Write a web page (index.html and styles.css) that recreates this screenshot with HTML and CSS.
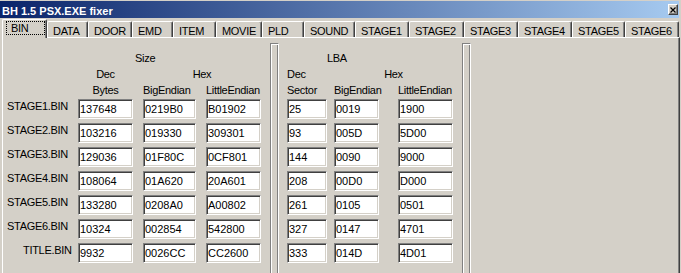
FILE: index.html
```html
<!DOCTYPE html>
<html>
<head>
<meta charset="utf-8">
<title>BH 1.5 PSX.EXE fixer</title>
<link rel="stylesheet" href="styles.css">
</head>
<body>
<div class="window">
  <div class="titlebar">
    <span class="title">BH 1.5 PSX.EXE fixer</span>
    <span class="close"><svg width="6" height="6" viewBox="0 0 6 6"><path d="M0.5 0.5 L5.5 5.5 M5.5 0.5 L0.5 5.5" stroke="#000" stroke-width="1.2" fill="none"/></svg></span>
  </div>
  <div class="tabs">
    <div class="tab sel"><span class="focus">BIN</span></div>
    <div class="tab">DATA</div>
    <div class="tab">DOOR</div>
    <div class="tab">EMD</div>
    <div class="tab">ITEM</div>
    <div class="tab">MOVIE</div>
    <div class="tab">PLD</div>
    <div class="tab">SOUND</div>
    <div class="tab">STAGE1</div>
    <div class="tab">STAGE2</div>
    <div class="tab">STAGE3</div>
    <div class="tab">STAGE4</div>
    <div class="tab">STAGE5</div>
    <div class="tab">STAGE6</div>
  </div>
  <div class="panel">
    <div class="group size">
      <div class="hd size-title">Size</div>
      <div class="hd c2 mid">Dec</div>
      <div class="hd c46 mid">Hex</div>
      <div class="hd c2 mid">Bytes</div>
      <div class="hd c4">BigEndian</div>
      <div class="hd c6">LittleEndian</div>

      <div class="label">STAGE1.BIN</div><div class="field c2">137648</div><div class="field c4">0219B0</div><div class="field c6">B01902</div>
      <div class="label">STAGE2.BIN</div><div class="field c2">103216</div><div class="field c4">019330</div><div class="field c6">309301</div>
      <div class="label">STAGE3.BIN</div><div class="field c2">129036</div><div class="field c4">01F80C</div><div class="field c6">0CF801</div>
      <div class="label">STAGE4.BIN</div><div class="field c2">108064</div><div class="field c4">01A620</div><div class="field c6">20A601</div>
      <div class="label">STAGE5.BIN</div><div class="field c2">133280</div><div class="field c4">0208A0</div><div class="field c6">A00802</div>
      <div class="label">STAGE6.BIN</div><div class="field c2">10324</div><div class="field c4">002854</div><div class="field c6">542800</div>
      <div class="label indent">TITLE.BIN</div><div class="field c2">9932</div><div class="field c4">0026CC</div><div class="field c6">CC2600</div>
    </div>
    <div class="sep"></div>
    <div class="group lba">
      <div class="hd lba-title">LBA</div>
      <div class="hd l1">Dec</div>
      <div class="hd l35 mid">Hex</div>
      <div class="hd l1">Sector</div>
      <div class="hd l3">BigEndian</div>
      <div class="hd l5">LittleEndian</div>

      <div class="field l1">25</div><div class="field l3">0019</div><div class="field l5">1900</div>
      <div class="field l1">93</div><div class="field l3">005D</div><div class="field l5">5D00</div>
      <div class="field l1">144</div><div class="field l3">0090</div><div class="field l5">9000</div>
      <div class="field l1">208</div><div class="field l3">00D0</div><div class="field l5">D000</div>
      <div class="field l1">261</div><div class="field l3">0105</div><div class="field l5">0501</div>
      <div class="field l1">327</div><div class="field l3">0147</div><div class="field l5">4701</div>
      <div class="field l1">333</div><div class="field l3">014D</div><div class="field l5">4D01</div>
    </div>
    <div class="sep"></div>
  </div>
</div>
</body>
</html>
```

FILE: styles.css
```css
html, body {
  margin: 0;
  height: 273px;
  overflow: hidden;
  background: #d4d0c8;
}
body {
  font-family: "Liberation Sans", Arial, sans-serif;
  font-size: 11px;
  color: #000;
}
.window {
  width: 681px;
  height: 273px;
  display: flex;
  flex-direction: column;
}

/* title bar */
.titlebar {
  height: 17px;
  margin: 1px 2px 0 0;
  background: linear-gradient(to right, #0a246a, #a6caf0);
  display: flex;
  align-items: flex-start;
  flex: none;
}
.title {
  color: #fff;
  font-weight: bold;
  line-height: 14px;
  padding: 3px 0 0 2px;
  white-space: nowrap;
}
.close {
  margin: 3px 1px 0 auto;
  width: 10px;
  height: 11px;
  box-sizing: border-box;
  background: #d4d0c8;
  border-top: 1px solid #fff;
  border-left: 1px solid #fff;
  border-right: 1px solid #404040;
  border-bottom: 1px solid #404040;
  box-shadow: inset -1px -1px #808080;
  display: flex;
  align-items: center;
  justify-content: center;
}
.close svg { display: block; }

/* tabs */
.tabs {
  height: 19px;
  display: flex;
  align-items: flex-end;
  padding-left: 2px;
  position: relative;
  z-index: 1;
  flex: none;
}
.tab {
  box-sizing: border-box;
  flex: none;
  height: 16px;
  border-top: 1px solid #fff;
  border-left: 1px solid #fff;
  border-right: 1px solid #404040;
  box-shadow: inset -1px 0 #808080;
  border-radius: 2px 2px 0 0;
  padding: 3px 0 0 5px;
  line-height: 12px;
  letter-spacing: -0.3px;
  white-space: nowrap;
  background: #d4d0c8;
}
.tab.sel {
  width: 45px;
  height: 19px;
  margin-bottom: -1px;
  padding: 0 0 0 3px;
}
.focus {
  display: block;
  box-sizing: border-box;
  width: 39px;
  height: 14px;
  margin-top: 1px;
  border: 1px dotted #000;
  padding: 1px 0 0 4px;
  line-height: 11px;
}
.tab:nth-child(2)  { width: 41px; }
.tab:nth-child(3)  { width: 44px; }
.tab:nth-child(4)  { width: 41px; }
.tab:nth-child(5)  { width: 43px; }
.tab:nth-child(6)  { width: 46px; }
.tab:nth-child(7)  { width: 42px; }
.tab:nth-child(8)  { width: 51px; }
.tab:nth-child(9)  { width: 54px; }
.tab:nth-child(10) { width: 55px; }
.tab:nth-child(11) { width: 54px; }
.tab:nth-child(12) { width: 54px; }
.tab:nth-child(13) { width: 53px; }
.tab:nth-child(14) { width: 54px; }

/* panel */
.panel {
  flex: 1 1 auto;
  min-height: 0;
  overflow: hidden;
  width: 678px;
  margin-left: 2px;
  box-sizing: border-box;
  border-top: 1px solid #fff;
  border-left: 1px solid #fff;
  border-right: 1px solid #404040;
  box-shadow: inset -1px 0 #808080;
  display: flex;
  align-items: flex-start;
}
.group {
  flex: none;
  box-sizing: border-box;
  display: grid;
  padding-top: 14px;
  grid-template-rows: 16px 16px 15px;
  grid-auto-rows: 24px;
  align-items: start;
}
.size {
  width: 267px;
  grid-template-columns: 75px 55px 10px 53px 10px 55px;
}
.lba {
  width: 183px;
  padding-left: 8px;
  grid-template-columns: 40px 7px 45px 19px 55px;
}
.sep {
  flex: none;
  width: 9px;
  align-self: stretch;
  margin-top: 5px;
  box-sizing: border-box;
  border-left: 1px solid #808080;
  border-top: 1px solid #808080;
  border-right: 1px solid #fff;
  box-shadow: inset 1px 1px #fff, inset -1px 0 #808080;
}

.hd {
  line-height: 13px;
  letter-spacing: -0.3px;
  white-space: nowrap;
}
.size-title { grid-column: 1 / -1; padding-left: 132px; }
.lba-title { grid-column: 1 / -1; padding-left: 40px; }
.mid { justify-self: center; }
.c2 { grid-column: 2; }
.c4 { grid-column: 4; }
.c6 { grid-column: 6; }
.c46 { grid-column: 4 / 7; }
.l1 { grid-column: 1; }
.l3 { grid-column: 3; }
.l5 { grid-column: 5; }
.l35 { grid-column: 3 / 6; }

.label {
  grid-column: 1;
  line-height: 13px;
  padding: 1px 0 0 4px;
  letter-spacing: -0.3px;
  white-space: nowrap;
}
.label.indent { padding-left: 20px; }

.field {
  height: 20px;
  box-sizing: border-box;
  background: #fff;
  border: 1px solid;
  border-color: #808080 #fff #fff #808080;
  box-shadow: inset 1px 1px #404040, inset -1px -1px #d4d0c8;
  line-height: 18px;
  padding-left: 1px;
  white-space: nowrap;
  overflow: hidden;
}
```
